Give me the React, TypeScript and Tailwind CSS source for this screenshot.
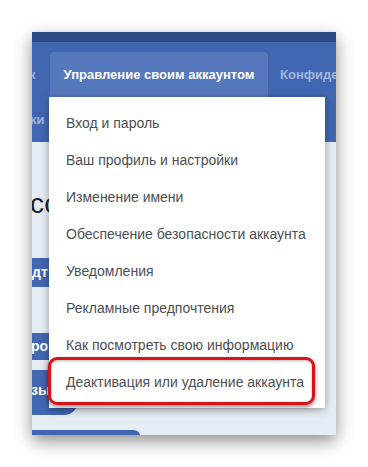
const items = [
  "Вход и пароль",
  "Ваш профиль и настройки",
  "Изменение имени",
  "Обеспечение безопасности аккаунта",
  "Уведомления",
  "Рекламные предпочтения",
  "Как посмотреть свою информацию",
  "Деактивация или удаление аккаунта",
];

export default function App() {
  return (
    <div className="w-[368px] h-[467px] bg-white pt-8 pl-8 font-['Liberation_Sans',Arial,sans-serif]">
      <div className="relative w-[304px] h-[403px] overflow-hidden bg-[#e6ecf3] shadow-[0_6px_16px_rgba(0,0,0,0.45)]">
        {/* top bar */}
        <div className="h-[10px] bg-[#2c4a84]" />

        {/* nav */}
        <div className="h-[100px] bg-[#4267b2]">
          <div className="h-[55px] flex items-end">
            <div className="w-[18px] shrink-0 h-[45px] flex items-center overflow-hidden">
              <span className="text-[13px] font-bold text-[#9fb3de] -ml-[3px]">к</span>
            </div>
            <div className="h-[45px] w-[218px] shrink-0 rounded-t-[4px] bg-[#5577bb] flex items-center justify-center">
              <span className="text-[13px] font-bold text-white whitespace-nowrap">Управление своим аккаунтом</span>
            </div>
            <div className="h-[45px] pl-[12px] shrink-0 flex items-center whitespace-nowrap">
              <span className="text-[13px] font-bold text-[#a3b6df]">Конфиде</span>
            </div>
          </div>
          <div className="h-[45px] flex items-center">
            <span className="text-[13px] font-bold text-[#9fb3de] -ml-[2px]">ки</span>
          </div>
        </div>

        {/* page body */}
        <div className="flex flex-col items-start">
          <div className="mt-[47px] h-[30px] flex items-center">
            <span className="text-[28px] text-[#1d2129] leading-none -ml-[2px]">со</span>
          </div>
          <div className="mt-[39px] h-[29px] w-[60px] bg-[#4267b2] flex items-center">
            <span className="text-[14px] font-bold text-white">дт</span>
          </div>
          <div className="mt-[46px] h-[27px] w-[60px] bg-[#4267b2] flex items-center">
            <span className="text-[14px] font-bold text-white -ml-[1px]">ро</span>
          </div>
          <div className="mt-[10px] h-[45px] w-[46px] bg-[#4267b2] rounded-br-[14px] pt-[8px]">
            <span className="text-[14px] font-bold text-white -ml-[1px]">зы</span>
          </div>
          <div className="mt-[15px] h-[6px] w-[108px] bg-[#4267b2] rounded-tr-[10px]" />
        </div>

        {/* dropdown */}
        <div className="absolute left-[17px] top-[65px] w-[276px] h-[311px] bg-white pt-[8px] shadow-[0_2px_8px_rgba(0,0,0,0.35)]">
          {items.map((t) => (
            <div key={t} className="h-[37px] pl-[17px] flex items-center text-[14px] text-[#4b4f56] whitespace-nowrap">
              {t}
            </div>
          ))}
        </div>

        {/* highlight */}
        <div className="absolute left-[16px] top-[325px] w-[267px] h-[48px] rounded-[9px] border-[3px] border-[#d7141c] shadow-[0_2px_4px_rgba(0,0,0,0.45),inset_0_1px_3px_rgba(0,0,0,0.3)]" />
      </div>
    </div>
  );
}
